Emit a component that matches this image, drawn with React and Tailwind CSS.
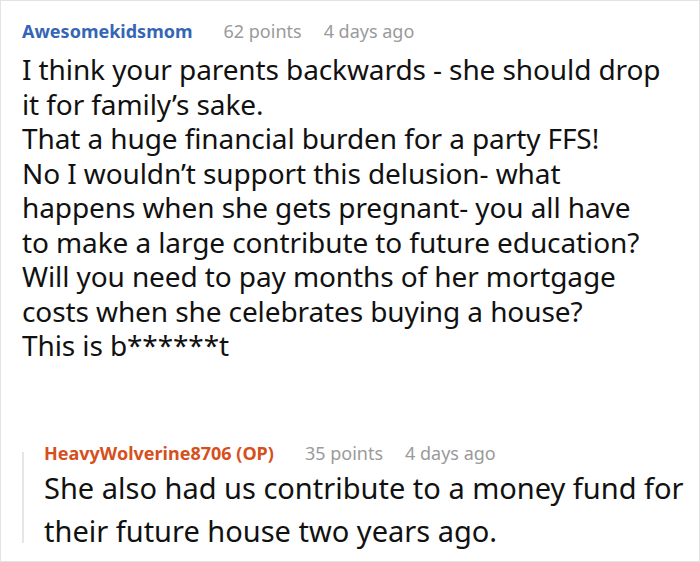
const parentLines = [
  "I think your parents backwards - she should drop",
  "it for family’s sake.",
  "That a huge financial burden for a party FFS!",
  "No I wouldn’t support this delusion- what",
  "happens when she gets pregnant- you all have",
  "to make a large contribute to future education?",
  "Will you need to pay months of her mortgage",
  "costs when she celebrates buying a house?",
  "This is b******t",
];

const replyLines = [
  "She also had us contribute to a money fund for",
  "their future house two years ago.",
];

function Meta({ name, color, points }) {
  return (
    <div className="flex items-center gap-[22px] text-[18px] leading-[26px] whitespace-nowrap">
      <span className={`font-bold mr-[9px] ${color}`}>{name}</span>
      <span className="text-[#9a9a9a]">{points} points</span>
      <span className="text-[#9a9a9a]">4 days ago</span>
    </div>
  );
}

export default function App() {
  return (
    <div className="w-[700px] h-[562px] border border-[#e3e3e3] bg-white font-['Noto_Sans',sans-serif] text-[#111] overflow-hidden">
      {/* Parent comment */}
      <div className="pl-[21px] pt-[17px]">
        <Meta name="Awesomekidsmom" color="text-[#3566b5]" points={62} />
        <div className="mt-[8px] text-[28px] leading-[34.5px] tracking-[-0.1px] whitespace-nowrap">
          {parentLines.map((line) => (
            <div key={line}>{line}</div>
          ))}
        </div>
      </div>

      {/* Reply */}
      <div className="ml-[21px] mt-[77px] flex">
        <div className="w-[2px] shrink-0 bg-[#e6e6e6] mt-[12px] mb-[9px]" />
        <div className="pl-[20px]">
          <Meta name="HeavyWolverine8706 (OP)" color="text-[#d6501d]" points={35} />
          <div className="text-[29px] leading-[43px] whitespace-nowrap">
            {replyLines.map((line) => (
              <div key={line}>{line}</div>
            ))}
          </div>
        </div>
      </div>
    </div>
  );
}
